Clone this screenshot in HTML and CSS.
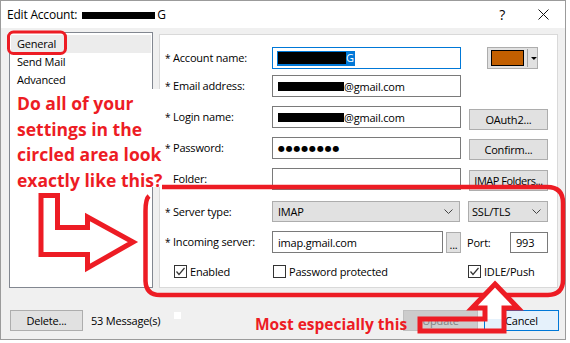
FILE: index.html
```html
<!DOCTYPE html>
<html lang="en">
<head>
    <meta charset="UTF-8">
    <title>Edit Account</title>
    <link rel="stylesheet" href="styles.css">
</head>
<body>
    <div class="window">
        <div class="titlebar">
            <span class="title">Edit Account: <span class="redact title-redact"></span>G</span>
            <span class="help">?</span>
            <svg class="close" width="11" height="11" viewBox="0 0 11 11">
                <path d="M0.5 0.5L10.5 10.5M10.5 0.5L0.5 10.5" stroke="#111" stroke-width="1"/>
            </svg>
        </div>

        <div class="main">
            <ul class="nav">
                <li class="selected">General</li>
                <li>Send Mail</li>
                <li>Advanced</li>
            </ul>

            <div class="panel">
                <div class="row">
                    <label class="label"><span class="req">*</span>Account name:</label>
                    <div class="field focused"><span class="selection"><span class="redact name-redact"></span>G</span></div>
                    <div class="color-btn">
                        <span class="swatch"></span>
                        <span class="color-split"></span>
                        <svg class="color-caret" width="6" height="3" viewBox="0 0 6 3"><polygon points="0,0 6,0 3,3" fill="#000"/></svg>
                    </div>
                </div>

                <div class="row row-email">
                    <label class="label"><span class="req">*</span>Email address:</label>
                    <div class="field"><span class="redact mail-redact"></span>@gmail.com</div>
                </div>

                <div class="row row-gap">
                    <label class="label"><span class="req">*</span>Login name:</label>
                    <div class="field"><span class="redact mail-redact"></span>@gmail.com</div>
                    <button class="btn side-btn oauth">OAuth2...</button>
                </div>

                <div class="row row-gap">
                    <label class="label"><span class="req">*</span>Password:</label>
                    <div class="field"><span class="dots">●●●●●●●●</span></div>
                    <button class="btn side-btn">Confirm...</button>
                </div>

                <div class="row row-gap">
                    <label class="label"><span class="req"></span>Folder:</label>
                    <div class="field"></div>
                    <button class="btn side-btn tight">IMAP Folders...</button>
                </div>

                <div class="row row-server">
                    <label class="label"><span class="req">*</span>Server type:</label>
                    <div class="combo combo-type">IMAP
                        <svg class="chevron" width="9" height="5" viewBox="0 0 9 5"><polyline points="0.5,0.5 4.5,4.5 8.5,0.5" fill="none" stroke="#444"/></svg>
                    </div>
                    <div class="combo combo-ssl">SSL/TLS
                        <svg class="chevron" width="9" height="5" viewBox="0 0 9 5"><polyline points="0.5,0.5 4.5,4.5 8.5,0.5" fill="none" stroke="#444"/></svg>
                    </div>
                </div>

                <div class="row row-gap">
                    <label class="label"><span class="req">*</span>Incoming server:</label>
                    <div class="field field-host">imap.gmail.com</div>
                    <button class="btn browse">...</button>
                    <span class="port-label">Port:</span>
                    <div class="field field-port">993</div>
                </div>

                <div class="row row-checks">
                    <label class="check check-enabled">
                        <span class="box"><svg width="11" height="11" viewBox="0 0 11 11"><polyline points="1.5,5.5 4,8.5 9.5,2" fill="none" stroke="#333" stroke-width="1.2"/></svg></span>Enabled
                    </label>
                    <label class="check check-protected">
                        <span class="box"></span>Password protected
                    </label>
                    <label class="check">
                        <span class="box"><svg width="11" height="11" viewBox="0 0 11 11"><polyline points="1.5,5.5 4,8.5 9.5,2" fill="none" stroke="#333" stroke-width="1.2"/></svg></span>IDLE/Push
                    </label>
                </div>
            </div>
        </div>

        <div class="footer">
            <button class="btn delete">Delete...</button>
            <span class="count">53 Message(s)</span>
            <span class="square"></span>
            <button class="btn disabled">Update</button>
            <button class="btn default">Cancel</button>
        </div>

        <!-- red marks drawn over the screenshot -->
        <svg class="marks" width="570" height="343" viewBox="0 0 570 343">
            <g fill="none" stroke="#ed1c24">
                <rect x="8.5" y="32" width="57" height="21.5" rx="5" stroke-width="3"/>
                <polygon points="41,195.5 57.5,195.5 57.5,227.5 87.5,227.5 87.5,217 133,242 87.5,268 87.5,254.5 41,254.5" stroke-width="5"/>
                <path d="M149 196 Q145.5 199 145.5 211 L145.5 281 Q146 295 160 295 L548 295 Q563 294.5 563 280 L563 203 Q563 187 547 187 L162 187" stroke-width="4.5"/>
            </g>
            <polygon points="495,284 518,308 504,308 504,319 485,319 485,308 472,308" fill="#fff"/>
            <polygon points="495,284 518,308 504,308 504,331 420,331 420,319 485,319 485,308 472,308" fill="none" stroke="#ed1c24" stroke-width="5"/>
        </svg>

        <div class="note note-question">Do all of your<br>settings in the<br>circled area look<br>exactly like this?</div>
        <div class="note note-especially">Most especially this</div>
    </div>
</body>
</html>
```

FILE: styles.css
```css
* {
    box-sizing: border-box;
}

body {
    margin: 0;
    background: #fff;
    font-family: 'Open Sans', sans-serif;
    font-size: 11px;
    letter-spacing: -0.2px;
    color: #000;
}

.window {
    position: relative;
    width: 566px;
    height: 340px;
    border: 1px solid #9b9b9b;
    background: #f0f0f0;
}

/* title bar */
.titlebar {
    display: flex;
    align-items: center;
    height: 27px;
    padding: 0 16px 0 6px;
    background: #fff;
}

.title {
    font-size: 12px;
}

.redact {
    display: inline-block;
    background: #000;
}

.title-redact {
    width: 73px;
    height: 7px;
    margin: 0 2px 0 2px;
}

.help {
    margin-left: auto;
    margin-right: 33px;
    font-size: 14px;
}

.close {
    display: block;
}

/* left list + right panel */
.main {
    display: flex;
    align-items: flex-start;
    height: 260px;
    padding: 4px 0 0 8px;
}

.nav {
    width: 144px;
    height: 256px;
    margin: 0;
    padding: 2px 1px;
    list-style: none;
    background: #fff;
    border: 1px solid #828790;
}

.nav li {
    height: 18px;
    line-height: 18px;
    padding-left: 6px;
}

.nav li.selected {
    background: #ececec;
}

.panel {
    width: 399px;
    height: 254px;
    margin: 2px 0 0 6px;
    padding: 12px 0 0 5px;
    background: #fff;
    border: 1px solid #d9d9d9;
}

.row {
    display: flex;
    align-items: flex-start;
    height: 22px;
}

.row-email {
    margin-top: 6px;
}

.row-gap {
    margin-top: 9px;
}

.row-server {
    margin-top: 11px;
    height: 21px;
}

.row-checks {
    margin-top: 12px;
    height: 13px;
    padding-left: 9px;
}

.label {
    display: flex;
    align-items: center;
    width: 107px;
    height: 21px;
}

.req {
    display: inline-block;
    width: 8px;
    font-size: 10px;
}

.field {
    display: flex;
    align-items: center;
    width: 189px;
    height: 22px;
    padding-left: 5px;
    background: #fff;
    border: 1px solid #7a7a7a;
    white-space: nowrap;
    overflow: hidden;
}

.field.focused {
    border-color: #0078d7;
}

.selection {
    display: inline-flex;
    align-items: flex-end;
    height: 15px;
    margin-left: -1px;
    padding: 0 1px 1px 1px;
    background: #0078d7;
    color: #fff;
}

.name-redact {
    width: 68px;
    height: 12px;
    margin-bottom: 1px;
}

.mail-redact {
    width: 66px;
    height: 9px;
}

.dots {
    font-family: 'DejaVu Sans', sans-serif;
    font-size: 8px;
    letter-spacing: 0.8px;
}

/* buttons */
.btn {
    height: 21px;
    padding: 0;
    font-family: inherit;
    font-size: 11px;
    letter-spacing: -0.2px;
    color: #000;
    background: #e1e1e1;
    border: 1px solid #adadad;
    white-space: nowrap;
}

.side-btn {
    width: 79px;
    margin: 2px 0 0 8px;
}

.side-btn.oauth {
    margin-top: 3px;
}

.side-btn.tight {
    letter-spacing: -0.5px;
}

.color-btn {
    display: flex;
    align-items: center;
    width: 51px;
    height: 22px;
    margin-left: 26px;
    padding-left: 3px;
    background: #e1e1e1;
    border: 1px solid #adadad;
}

.swatch {
    width: 34px;
    height: 16px;
    background: #c25f00;
    border: 1px solid #000;
}

.color-split {
    width: 1px;
    height: 18px;
    margin-left: 3px;
    background: #a0a0a0;
}

.color-caret {
    margin-left: 3px;
}

.combo {
    display: flex;
    align-items: center;
    justify-content: space-between;
    height: 21px;
    padding: 0 6px 0 5px;
    background: #e1e1e1;
    border: 1px solid #adadad;
}

.combo-type {
    width: 188px;
}

.combo-ssl {
    width: 80px;
    margin-left: 8px;
    padding-left: 3px;
}

.field-host {
    width: 171px;
}

.browse {
    width: 15px;
    margin: 1px 0 0 3px;
    line-height: 24px;
}

.port-label {
    width: 43px;
    margin-left: 6px;
    line-height: 24px;
}

.field-port {
    width: 38px;
    margin-top: 1px;
    height: 21px;
}

/* checkboxes */
.check {
    display: flex;
    align-items: center;
    gap: 3px;
    height: 13px;
}

.check-enabled {
    width: 99px;
}

.check-protected {
    width: 195px;
}

.box {
    display: flex;
    align-items: center;
    justify-content: center;
    width: 13px;
    height: 13px;
    background: #fff;
    border: 1px solid #333;
}

/* bottom buttons */
.footer {
    display: flex;
    align-items: flex-start;
    padding: 22px 6px 0 9px;
}

.delete {
    width: 73px;
}

.count {
    width: 83px;
    margin-left: 8px;
    line-height: 21px;
}

.square {
    width: 7px;
    height: 7px;
    margin-top: 2px;
    background: #fff;
}

.disabled {
    width: 75px;
    margin-left: auto;
    color: #838383;
    background: #cccccc;
    border-color: #bfbfbf;
}

.default {
    width: 75px;
    margin-left: 6px;
    background: #e5f1fb;
    border-color: #0078d7;
}

/* annotations */
.marks {
    position: absolute;
    left: -1px;
    top: -1px;
    pointer-events: none;
}

.note {
    position: absolute;
    color: #ed1c24;
    font-family: 'Open Sans', sans-serif;
    font-weight: 700;
    letter-spacing: 0;
    white-space: nowrap;
}

.note-question {
    left: 15px;
    top: 88px;
    width: 145px;
    height: 98px;
    padding: 2px 0 0 1px;
    font-size: 17.5px;
    line-height: 25.5px;
    background: #fff;
}

.note-especially {
    left: 254px;
    top: 314px;
    font-size: 15.5px;
    line-height: 18px;
}
```
